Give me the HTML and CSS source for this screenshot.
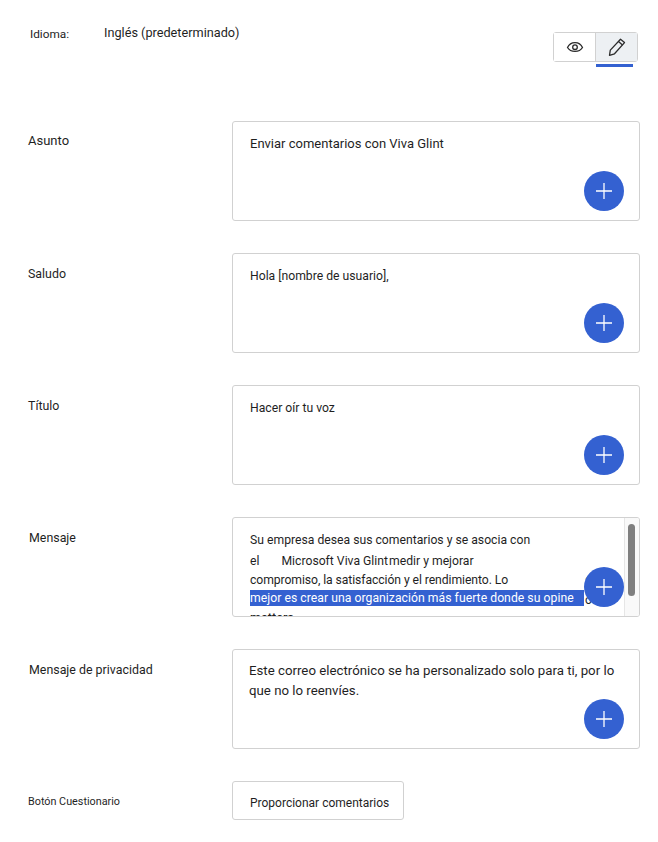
FILE: index.html
```html
<!DOCTYPE html>
<html lang="es">
<head>
    <meta charset="UTF-8">
    <meta name="viewport" content="width=device-width, initial-scale=1.0">
    <title>Idioma</title>
    <link rel="stylesheet" href="styles.css">
</head>
<body>
    <div class="page">
        <div class="top-row">
            <span class="lang-label">Idioma:</span>
            <span class="lang-value">Inglés (predeterminado)</span>
            <div class="toggle">
                <button class="toggle-btn" aria-label="Vista previa">
                    <svg width="18" height="18" viewBox="0 0 18 18" fill="none" stroke="#2b2b2b" stroke-width="1.3">
                        <path d="M1.5 9.5C3 6.3 5.7 4.6 9 4.6s6 1.7 7.5 4.9C15 12 12.300 13.400 9 13.400S3 12 1.500 9.500z"/>
                        <circle cx="9" cy="9.200" r="2.300"/>
                    </svg>
                </button>
                <button class="toggle-btn active" aria-label="Editar">
                    <svg width="20" height="20" viewBox="0 0 20 20" fill="none" stroke="#2b2b2b" stroke-width="1.3" stroke-linejoin="round">
                        <path d="M13.500 2.300l4 3.300L7.500 16.800 2.500 18.300l.8-5.200z"/>
                        <path d="M11.500 4.600l4 3.300"/>
                    </svg>
                </button>
            </div>
        </div>

        <div class="row row-first">
            <div class="label">Asunto</div>
            <div class="box">
                <p class="box-text size-14">Enviar comentarios con Viva Glint</p>
                <button class="add-btn" aria-label="Agregar"><svg width="16" height="16" viewBox="0 0 16 16" stroke="#fff" stroke-width="1.300"><path d="M8 0v16M0 8h16"/></svg></button>
            </div>
        </div>

        <div class="row">
            <div class="label">Saludo</div>
            <div class="box">
                <p class="box-text">Hola [nombre de usuario],</p>
                <button class="add-btn" aria-label="Agregar"><svg width="16" height="16" viewBox="0 0 16 16" stroke="#fff" stroke-width="1.300"><path d="M8 0v16M0 8h16"/></svg></button>
            </div>
        </div>

        <div class="row">
            <div class="label">Título</div>
            <div class="box">
                <p class="box-text">Hacer oír tu voz</p>
                <button class="add-btn" aria-label="Agregar"><svg width="16" height="16" viewBox="0 0 16 16" stroke="#fff" stroke-width="1.300"><path d="M8 0v16M0 8h16"/></svg></button>
            </div>
        </div>

        <div class="row">
            <div class="label label-message">Mensaje</div>
            <div class="box box-scroll">
                <div class="scroll-text">
                    <div class="line">Su empresa desea sus comentarios y se asocia con</div>
                    <div class="line">el<span class="gap"></span>Microsoft Viva Glint<span class="tight-gap"></span>medir y mejorar</div>
                    <div class="line line-narrow">compromiso, la satisfacción y el rendimiento. Lo<span class="stray">a</span></div>
                    <div class="line line-selected"><span class="selected">mejor es crear una organización más fuerte donde su opine</span><span class="stray">o</span></div>
                    <div class="line line-bold">matters</div>
                </div>
                <div class="scrollbar"><div class="thumb"></div></div>
                <button class="add-btn" aria-label="Agregar"><svg width="16" height="16" viewBox="0 0 16 16" stroke="#fff" stroke-width="1.300"><path d="M8 0v16M0 8h16"/></svg></button>
            </div>
        </div>

        <div class="row">
            <div class="label label-privacy">Mensaje de privacidad</div>
            <div class="box">
                <p class="box-text size-14 tall">Este correo electrónico se ha personalizado solo para ti, por lo que no lo reenvíes.</p>
                <button class="add-btn" aria-label="Agregar"><svg width="16" height="16" viewBox="0 0 16 16" stroke="#fff" stroke-width="1.300"><path d="M8 0v16M0 8h16"/></svg></button>
            </div>
        </div>

        <div class="row">
            <div class="label label-small">Botón Cuestionario</div>
            <div class="survey-btn">Proporcionar comentarios</div>
        </div>
    </div>
</body>
</html>
```

FILE: styles.css
```css
body
{
    margin: 0;
    font-family: Roboto, Arial, sans-serif;
    font-size: 13px;
    color: #1f1f1f;
    background: #fff;
}
.page
{
    width: 640px;
    padding-top: 25px;
}
.top-row
{
    display: flex;
    align-items: flex-start;
    height: 96px;
    padding-left: 30px;
}
.lang-label
{
    width: 74px;
    padding-top: 2px;
    font-size: 11.800px;
}
.lang-value
{
    font-size: 12.700px;
}
.toggle
{
    display: flex;
    margin-left: auto;
    margin-right: 2px;
    margin-top: 7px;
    height: 30px;
    border: 1px solid #d1d1d1;
    border-radius: 3px;
    box-sizing: border-box;
}
.toggle-btn
{
    display: flex;
    align-items: center;
    justify-content: center;
    width: 42px;
    padding: 0;
    border: none;
    background: #fff;
}
.toggle-btn:first-child
{
    width: 41px;
}
.toggle-btn.active
{
    position: relative;
    background: #edf0f3;
    border-left: 1px solid #d1d1d1;
}
.toggle-btn.active::after
{
    content: "";
    position: absolute;
    left: 0;
    right: 4px;
    bottom: -6px;
    height: 3px;
    background: #3461d1;
}
.row
{
    display: flex;
    align-items: flex-start;
    margin-bottom: 32px;
    padding-left: 28px;
}
.label
{
    width: 204px;
    padding-top: 13px;
    font-size: 12.400px;
}
.row-first .label
{
    padding-top: 12px;
    font-size: 13px;
}
.label-message
{
    padding-left: 1px;
    width: 203px;
}
.label-privacy
{
    padding-left: 1px;
    width: 203px;
    font-size: 12.400px;
}
.label-small
{
    font-size: 10.800px;
    padding-top: 14px;
}
.box
{
    position: relative;
    width: 408px;
    height: 100px;
    box-sizing: border-box;
    border: 1px solid #d1d1d1;
    border-radius: 3px;
    overflow: hidden;
}
.box-text
{
    margin: 0;
    padding: 12px 17px 0;
    font-size: 12.200px;
    line-height: 20px;
}
.size-14
{
    font-size: 13px;
}
.tall
{
    padding: 11px 16px 0;
    font-size: 13.250px;
}
.add-btn
{
    position: absolute;
    right: 15px;
    bottom: 9px;
    display: flex;
    align-items: center;
    justify-content: center;
    width: 40px;
    height: 40px;
    padding: 0;
    border: none;
    border-radius: 50%;
    background: #3461d1;
}
.box-scroll
{
    display: flex;
}
.scroll-text
{
    flex: 1;
    padding: 12px 0 0 17px;
    font-size: 12.200px;
    line-height: 20px;
    overflow: hidden;
    white-space: nowrap;
}
.line
{
    height: 19px;
}
.line:first-child
{
    height: 21px;
}
.line-narrow
{
    height: 20px;
    letter-spacing: -0.080px;
}
.line-selected
{
    height: 18px;
}
.line-bold
{
    font-size: 12.600px;
    font-weight: 500;
}
.gap
{
    display: inline-block;
    width: 22px;
}
.tight-gap
{
    display: inline-block;
    width: 1px;
}
.selected
{
    display: inline-block;
    width: 334px;
    background: #3461d1;
    color: #fff;
    line-height: 16px;
    letter-spacing: 0.040px;
    box-sizing: border-box;
    overflow: hidden;
}
.stray
{
    position: absolute;
    left: 352px;
}
.scrollbar
{
    width: 14px;
    flex: none;
    padding-top: 6px;
    background: #f9f9f9;
    border-left: 1px solid #e6e6e6;
}
.thumb
{
    width: 7px;
    height: 72px;
    margin-left: 3px;
    border-radius: 4px;
    background: #7f7f7f;
}
.survey-btn
{
    width: 172px;
    height: 39px;
    box-sizing: border-box;
    padding-left: 17px;
    border: 1px solid #d1d1d1;
    border-radius: 3px;
    font-size: 12px;
    line-height: 42px;
}
```
